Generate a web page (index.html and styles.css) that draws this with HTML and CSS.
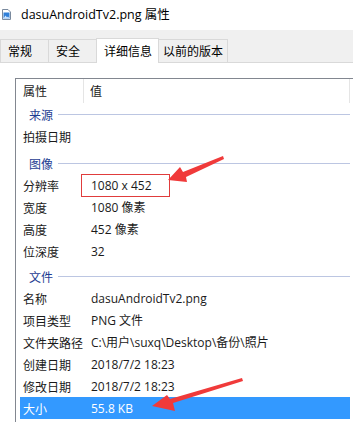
FILE: index.html
```
<!DOCTYPE html>
<html lang="zh">
<head>
    <meta charset="UTF-8">
    <title>dasuAndroidTv2.png 属性</title>
    <link rel="stylesheet" href="styles.css">
</head>
<body>
    <!-- Barre de titre -->
    <div class="titlebar">
        <svg class="file-icon" viewBox="0 0 9 11" width="9" height="11">
            <path d="M0.5 0.5h5.5l2.5 2.5v7.5h-8z" fill="#fff" stroke="#7a8a9e"/>
            <rect x="1.5" y="3.5" width="6" height="6" fill="#2f7fd8"/>
            <path d="M1.5 9.5l2-3 1.5 2 1-1 1.5 2z" fill="#cfe6ff"/>
        </svg>
        <span class="title">dasuAndroidTv2.png 属性</span>
    </div>

    <!-- Onglets -->
    <div class="tabs">
        <div class="tab">常规</div>
        <div class="tab">安全</div>
        <div class="tab active">详细信息</div>
        <div class="tab">以前的版本</div>
    </div>

    <div class="panel">
        <div class="listbox">
            <div class="row header">
                <div class="name">属性</div>
                <div class="value">值</div>
            </div>

            <div class="group first"><span>来源</span></div>
            <div class="row"><div class="name">拍摄日期</div><div class="value"></div></div>

            <div class="group"><span>图像</span></div>
            <div class="row"><div class="name">分辨率</div><div class="value"><span class="boxed">1080 x 452</span></div></div>
            <div class="row"><div class="name">宽度</div><div class="value">1080 像素</div></div>
            <div class="row"><div class="name">高度</div><div class="value">452 像素</div></div>
            <div class="row"><div class="name">位深度</div><div class="value">32</div></div>

            <div class="group small"><span>文件</span></div>
            <div class="row"><div class="name">名称</div><div class="value">dasuAndroidTv2.png</div></div>
            <div class="row"><div class="name">项目类型</div><div class="value">PNG 文件</div></div>
            <div class="row"><div class="name">文件夹路径</div><div class="value">C:\用户\suxq\Desktop\备份\照片</div></div>
            <div class="row"><div class="name">创建日期</div><div class="value">2018/7/2 18:23</div></div>
            <div class="row"><div class="name">修改日期</div><div class="value">2018/7/2 18:23</div></div>
            <div class="row selected"><div class="name">大小</div><div class="value">55.8 KB</div></div>
        </div>
    </div>

    <!-- Flèches rouges d'annotation -->
    <svg class="arrows" viewBox="0 0 353 422" width="353" height="422">
        <polygon points="223,156 224,159 186,177 187,182 168,180 180,167 183,172" fill="#f03a3a"/>
        <polygon points="242,378 243,381 173,403 175,411 152,406 167,395 170,399" fill="#f03a3a"/>
    </svg>
</body>
</html>
```

FILE: styles.css
```
* {
    margin: 0;
    padding: 0;
    box-sizing: border-box;
}

body {
    width: 353px;
    height: 422px;
    overflow: hidden;
    background: #f0f0f0;
    font-family: 'Noto Sans CJK SC', sans-serif;
    font-size: 12px;
    color: #1a1a1a;
    position: relative;
}

/* Title */
.titlebar {
    height: 30px;
    background: #fff;
    display: flex;
    align-items: center;
    padding-left: 2px;
}

.file-icon {
    margin-right: 10px;
    margin-top: -2px;
}

.title {
    font-family: 'Open Sans', 'Noto Sans CJK SC', sans-serif;
    font-size: 12.5px;
    color: #000;
    margin-top: -4px;
}

/* Tabs */
.tabs {
    display: flex;
    height: 32px;
    padding-top: 7px;
    align-items: flex-end;
}

.tab {
    height: 23px;
    padding: 0 0 0 7px;
    line-height: 22px;
    border: 1px solid #d9d9d9;
    border-bottom: none;
    margin-right: -1px;
    background: #f0f0f0;
    color: #000;
    white-space: nowrap;
    width: 49px;
}

.tab.active {
    height: 25px;
    width: 63px;
    background: #fff;
    position: relative;
    z-index: 1;
    margin-bottom: -1px;
    line-height: 24px;
}

.tab:last-child {
    width: 70px;
    padding-left: 4px;
}

.panel {
    background: #fff;
    border-top: 1px solid #d9d9d9;
    height: 360px;
    padding: 15px 0 0 15px;
}

/* List */
.listbox {
    border-top: 1px solid #828790;
    border-left: 1px solid #828790;
    height: 100%;
    padding: 0 3px 0 5px;
}

.row {
    display: flex;
    height: 22px;
    align-items: center;
}

.name {
    width: 63px;
    padding-left: 2px;
    white-space: nowrap;
}

.value {
    flex: 1;
    padding-left: 7px;
    font-family: 'Open Sans', 'Noto Sans CJK SC', sans-serif;
    white-space: nowrap;
}

.row.header {
    height: 24px;
}

.row.header .name {
    height: 24px;
    line-height: 24px;
    border-right: 1px solid #e5e5e5;
}

.row.header .value {
    height: 24px;
    line-height: 24px;
    padding-left: 6px;
    border-right: 1px solid #e5e5e5;
    font-family: 'Noto Sans CJK SC', sans-serif;
}

.group {
    display: flex;
    align-items: center;
    height: 22px;
    margin-top: 5px;
    padding-left: 8px;
    color: #1e3d92;
}

.group.first {
    margin-top: 0;
}

.group.small {
    margin-top: 3px;
}

.group::after {
    content: '';
    flex: 1;
    height: 1px;
    background: #bcc6e2;
    margin-left: 5px;
}

.boxed {
    display: inline-block;
    border: 1px solid #e03c3c;
    margin-left: -10px;
    padding: 0 9px;
    width: 89px;
    height: 23px;
    line-height: 21px;
}

.row.selected {
    background: #3399ff;
    color: #fff;
    margin-left: -1px;
    padding-left: 1px;
}

.arrows {
    position: absolute;
    top: 0;
    left: 0;
    pointer-events: none;
}
```
